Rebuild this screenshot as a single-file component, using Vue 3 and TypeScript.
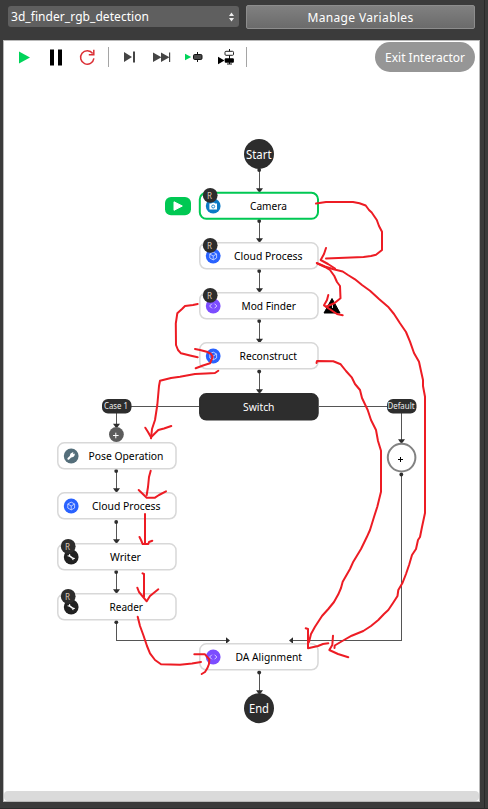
<script setup lang="ts">
type IconKind = 'camera' | 'cube' | 'code' | 'wrench' | 'plug'

interface FlowNode {
  label: string
  x: number
  y: number
  textX: number
  textW: number
  icon?: IconKind
  repeat?: boolean
  kind?: 'active' | 'dark'
}

const nodes: FlowNode[] = [
  { label: 'Camera', x: 199, y: 192, textX: 250, textW: 37, icon: 'camera', repeat: true, kind: 'active' },
  { label: 'Cloud Process', x: 199, y: 242, textX: 234, textW: 68.5, icon: 'cube', repeat: true },
  { label: 'Mod Finder', x: 199, y: 292, textX: 241.5, textW: 54.5, icon: 'code', repeat: true },
  { label: 'Reconstruct', x: 199, y: 342, textX: 239.5, textW: 57.5, icon: 'cube' },
  { label: 'Switch', x: 199, y: 393, textX: 243, textW: 31.5, kind: 'dark' },
  { label: 'Pose Operation', x: 57, y: 442, textX: 88.5, textW: 75, icon: 'wrench' },
  { label: 'Cloud Process', x: 57, y: 492, textX: 92, textW: 68.5, icon: 'cube' },
  { label: 'Writer', x: 57, y: 543, textX: 110, textW: 31, icon: 'plug', repeat: true },
  { label: 'Reader', x: 57, y: 593, textX: 109.5, textW: 33.5, icon: 'plug', repeat: true },
  { label: 'DA Alignment', x: 199, y: 643, textX: 235.5, textW: 66.5, icon: 'code' },
]

const iconColors: Record<IconKind, string> = {
  camera: '#0b7ac5',
  cube: '#2962ff',
  code: '#7c4dff',
  wrench: '#546e7a',
  plug: '#212121',
}

interface Link { x: number; from: number; to: number }

const links: Link[] = [
  { x: 259.5, from: 170, to: 191.5 },
  { x: 259.5, from: 221, to: 241.5 },
  { x: 259.5, from: 271, to: 291.5 },
  { x: 259.5, from: 321, to: 342 },
  { x: 259.5, from: 371.5, to: 392.5 },
  { x: 116.5, from: 413, to: 427 },
  { x: 116.5, from: 471, to: 491.5 },
  { x: 116.5, from: 522, to: 542.5 },
  { x: 116.5, from: 572, to: 592.5 },
  { x: 401.5, from: 413, to: 442.5 },
  { x: 259.5, from: 672.5, to: 693.5 },
]

const strokes: string[] = [
  '316,203.5 326,202 353,202 359.5,203.3 365.7,205.5 369,210 371.7,212.5 376.8,220 379,226 382,231.7 382,250 376,254.7 371,256 363.5,257 326,258.5',
  '326,248 324,254 320.7,260 328,264 335,268.5',
  '316.8,263 325,266.5 333.5,269.3 342.7,271.5 348,275 355,279.3 362,285 370,290.7 379,299 388,306.7 394,314 400,323.3 406,332 410,341.7 414,353 419,361.7 421,371 423,380 423,386 425,396.7 425,513 422,527 420,537 418,540 416,549 412,555 409.3,564.3 406,574 402.3,583.3 398.3,590 397.5,596 393,603 388.3,610 384,614 378.3,620 371,626 363.3,631 351.7,635.7 344,640 334.7,645.5 334.5,648',
  '333,635.7 332.3,645 329.3,650 338,654 348.3,657.3',
  '317,263.3 325,267 330,270 334.3,276 337,282 340,286 340.5,298.3 334.3,303.3 326,306.7',
  '328.3,295 327,300 324,305.3 331,310 337,314 342.7,315.3',
  '316.5,363 317,361 333.3,361.3 340.7,364.3 346,371 351.7,377.3 355,384 360,390 362,398 367.7,410 371,420 376,430 378,441 381,450.7 381,491.7 377.3,506.7 374,517 370,530 366.7,537.3 361,549 353.3,561.7 350,569 342.7,581.7 341,588 338.3,594.3 334,602 328.3,609 322,616 315,626.7 311,634 309,642',
  '305.7,628.3 308,629 308,648.3 318,646 323,644 328.3,643.3',
  '197.7,304 193,305 185,306 182,309 177.3,313.3 175.8,323.3 176,345 178,350 181,353.3 190,355.5 197.7,357.3',
  '195,349 200,350 206.7,351.7 211,354 212.7,356.7 210,363.3 203,365.5 195.7,368.3',
  '218.3,370.7 215,373 206,373.5 195,374 180,376.7 171,378 160,380.7 159,386 157.3,405 155,420 152,429 151,438.3',
  '145.3,427.7 148,432 151,437.3 158.3,430 164,428.5 171.3,426',
  '150.7,470.7 149,477 148,487 146.7,495',
  '138.7,490 146.7,497.7 155,497.7 159,495 166,491.3',
  '145,514 145,543',
  '139.5,537 141,540 142.7,544 148.3,544 149,542 152.3,540.7',
  '142.5,573.3 144,574 144,596.7',
  '137.3,587.7 139,592 146.7,601.3 150,596 158.3,589.3',
  '137.7,616.7 140,626 143.3,635 147,646 150,653.3 155,660 161,664.3 180,664.7 192,663.5 201,662',
  '194.3,654.3 205,654.3 209.3,659.3 209,664 207.3,668.3 205,672 201.7,674',
]
</script>

<template>
  <div class="window">
    <main class="content">
      <header class="header">
        <div class="select">
          <span class="select-text">3d_finder_rgb_detection</span>
          <svg class="spin" width="5" height="10" viewBox="0 0 5 10">
            <path d="M0 4L2.5 0.5L5 4ZM0 6L2.5 9.5L5 6Z" fill="#eee" />
          </svg>
        </div>
        <button class="manage"><span class="manage-text">Manage Variables</span></button>
      </header>

      <section class="panel">
        <div class="toolbar">
          <svg class="tool" viewBox="0 0 32 24"><path d="M11 6.5L22 12.5L11 18.5Z" fill="#00d45a" /></svg>
          <svg class="tool" viewBox="0 0 32 24"><path d="M10 4.5h4v16h-4zM18 4.5h4v16h-4z" fill="#000" /></svg>
          <svg class="tool" viewBox="0 0 32 24">
            <path d="M20.7 8.5A6.7 6.7 0 1 0 21.9 13.4" fill="none" stroke="#db2f35" stroke-width="1.5" />
            <path d="M21.8 4.8V9.7H16.8" fill="none" stroke="#db2f35" stroke-width="1.5" />
          </svg>
          <span class="sep"></span>
          <svg class="tool" viewBox="0 0 32 24"><path d="M10 7L18 12L10 17ZM19 6.5h2v11h-2z" fill="#454545" /></svg>
          <svg class="tool" viewBox="0 0 32 24"><path d="M7 7.5L15 12V7.5L23 12V7.5h1.2v9.5H23V12.5L15 17V12.5L7 17Z" fill="#454545" /></svg>
          <svg class="tool" viewBox="0 0 32 24">
            <path d="M7 8.7L13.2 12L7 15.3Z" fill="#00d45a" />
            <path d="M19.5 7v10" stroke="#111" stroke-width="1" />
            <rect x="15.5" y="9.5" width="8.5" height="5" rx="1.2" fill="#4a4a4a" stroke="#111" />
          </svg>
          <svg class="tool" viewBox="0 0 32 24">
            <path d="M8 11.8L14.5 15.5L8 19.2Z" fill="#000" />
            <path d="M19.5 4v15" stroke="#111" />
            <rect x="15" y="6.3" width="8.5" height="4" rx="1" fill="#fff" stroke="#222" />
            <rect x="14.7" y="13.2" width="9.2" height="4.5" rx="1" fill="#000" />
            <path d="M17 19h5" stroke="#111" />
          </svg>
          <span class="sep"></span>
          <button class="exit"><span class="exit-text">Exit Interactor</span></button>
        </div>

        <svg class="canvas" width="475" height="716" viewBox="4 75 475 716">
          <g stroke="#555" stroke-width="1" fill="none" shape-rendering="crispEdges">
            <path v-for="(l, i) in links" :key="i" :d="`M${l.x} ${l.from}V${l.to}`" />
            <path d="M131 406.5H199M319 406.5H387" />
            <path d="M116.5 622V640.5H228M401.5 474V640.5H291" />
          </g>
          <g fill="#2d2d2d">
            <template v-for="(l, i) in links" :key="i">
              <path :d="`M${l.x - 3.5} ${l.to - 3.2}H${l.x + 3.5}L${l.x + 1} ${l.to + 0.2}H${l.x - 1}Z`" />
              <circle v-if="l.from !== 413" :cx="l.x - 0.3" :cy="l.from" r="1.9" />
            </template>
            <circle cx="116.3" cy="622.2" r="1.9" />
            <circle cx="401.3" cy="474.5" r="1.9" />
            <path d="M226 637.3L230 640.5L226 643.7ZM293 637.3L289 640.5L293 643.7Z" />
            <circle cx="259" cy="154" r="15" />
            <circle cx="259" cy="708.2" r="15" />
            <rect x="102" y="399" width="29.5" height="14.5" rx="6" />
            <rect x="387" y="399" width="29.5" height="14.5" rx="6" />
          </g>

          <g class="terminal">
            <text x="246" y="159" textLength="25.5" lengthAdjust="spacingAndGlyphs">Start</text>
            <text x="249" y="713" textLength="20" lengthAdjust="spacingAndGlyphs">End</text>
          </g>
          <g class="tiny">
            <text x="104" y="409" textLength="24" lengthAdjust="spacingAndGlyphs">Case 1</text>
            <text x="387.5" y="409" textLength="27" lengthAdjust="spacingAndGlyphs">Default</text>
          </g>

          <circle cx="116.4" cy="434.5" r="7.4" fill="#5c5c5c" />
          <path d="M113 435.5H118.6M115.8 432.7V438.3" stroke="#fff" stroke-width="1" />
          <circle cx="401.6" cy="457.6" r="13.8" fill="#fff" stroke="#828282" stroke-width="2" />
          <path d="M398 459.5H403M400.5 457V462" stroke="#000" stroke-width="1" />

          <rect x="165" y="197" width="26" height="18.3" rx="6" fill="#00c853" />
          <path d="M174 201.8L182.3 206L174 210.3Z" fill="#fff" stroke="#fff" stroke-linejoin="round" />

          <g v-for="(n, i) in nodes" :key="i">
            <rect
              :x="n.x + 0.8" :y="n.y + 0.8" width="118.2" height="26" rx="6.5"
              :class="['node', n.kind]"
            />
            <g v-if="n.icon" :transform="`translate(${n.x + 14.2} ${n.y + 14})`">
              <circle r="7.4" :fill="iconColors[n.icon]" />
              <g v-if="n.icon === 'camera'">
                <path d="M-3.8 -2.4H-1.8L-1.2 -3.3H1.2L1.8 -2.4H3.8V3.4H-3.8Z" fill="#fff" />
                <circle cy="0.5" r="1.5" fill="#fff" stroke="#0b7ac5" stroke-width="0.9" />
              </g>
              <path
                v-else-if="n.icon === 'cube'" d="M0 -3.9L3.4 -2V2L0 3.9L-3.4 2V-2ZM-3.4 -2L0 0L3.4 -2M0 0V3.9"
                fill="none" stroke="#c9d6ff" stroke-width="0.9"
              />
              <path
                v-else-if="n.icon === 'code'" d="M-1.3 -2.3L-3.6 0L-1.3 2.3M1.3 -2.3L3.6 0L1.3 2.3"
                fill="none" stroke="#ddd0ff" stroke-width="1"
              />
              <g v-else-if="n.icon === 'wrench'">
                <path d="M-2.8 2.8L0.8 -0.8" stroke="#fff" stroke-width="2" stroke-linecap="round" />
                <path d="M-1.4 -0.6L-0.6 -2.6L1.6 -3.7L2.4 -3.2L1.6 -1.8L3.4 -2.4L3.6 -1L2.4 0.8L0.4 1.4Z" fill="#fff" />
              </g>
              <g v-else stroke="#fff" fill="none">
                <path d="M-1.6 -1.2L1.6 1.4" stroke-width="1.5" />
                <path d="M-3.6 -1.2L-1.8 -0.9L-1.5 -2.9M3.6 1.5L1.9 1.2L1.6 3.2" stroke-width="1.1" />
              </g>
            </g>
            <g v-if="n.repeat">
              <circle :cx="n.x + 11.2" :cy="n.y + 3.3" r="7.4" fill="#2d2d2d" />
              <text class="repeat" :x="n.x + 10.5" :y="n.y + 6.6" text-anchor="middle">R</text>
            </g>
            <text
              :class="['label', { light: n.kind === 'dark' }]" :x="n.textX" :y="n.y + 18"
              :textLength="n.textW" lengthAdjust="spacingAndGlyphs"
            >{{ n.label }}</text>
          </g>

          <path d="M332 298.5L340 313H324Z" fill="#000" stroke="#000" stroke-linejoin="round" />
          <path d="M332.5 304V308M332.5 310V311.5" stroke="#ddd" stroke-width="1" />

          <g class="markup">
            <polyline v-for="(s, i) in strokes" :key="i" :points="s" />
          </g>
        </svg>

        <div class="scrollbar"></div>
      </section>
    </main>
    <aside class="gutter"></aside>
  </div>
</template>

<style>
body {
  margin: 0;
  background: #3b3b3b;
}
</style>

<style scoped>
.window {
  box-sizing: border-box;
  display: flex;
  width: 488px;
  height: 809px;
  overflow: hidden;
  background: #3b3b3b;
  border-bottom: 1px solid #2b2b2b;
  font-family: "Noto Sans", "Open Sans", sans-serif;
}
.content {
  box-sizing: border-box;
  width: 484px;
  padding-left: 3px;
}
.gutter {
  box-sizing: border-box;
  width: 4px;
  border-left: 1px solid #292929;
}
.header {
  box-sizing: border-box;
  display: flex;
  align-items: flex-start;
  gap: 7px;
  height: 40px;
  padding: 5px 0 0 5px;
}
.select {
  box-sizing: border-box;
  display: flex;
  align-items: center;
  justify-content: space-between;
  width: 231px;
  height: 21px;
  margin-top: 1px;
  padding: 0 5px 0 3px;
  border-radius: 3px;
  background: #5f5f5f;
  color: #fff;
}
.select-text,
.manage-text,
.exit-text {
  font-size: 12px;
  line-height: 20px;
  white-space: nowrap;
}
.select-text {
  letter-spacing: 0.06px;
}
.manage-text {
  position: relative;
  top: 1px;
  letter-spacing: 0.35px;
}
.exit-text {
  position: relative;
  top: 1px;
}
.manage {
  box-sizing: border-box;
  width: 229px;
  height: 24px;
  padding: 0;
  border: 1px solid #8d8d8d;
  border-radius: 2px;
  background: linear-gradient(#808080, #6b6b6b);
  color: #fff;
  font-family: inherit;
}
.panel {
  box-sizing: border-box;
  display: flex;
  flex-direction: column;
  width: 477px;
  height: 762px;
  border: 1px solid #b9b9b9;
  background: #fff;
}
.toolbar {
  box-sizing: border-box;
  display: flex;
  align-items: center;
  height: 34px;
  padding: 0 4px;
}
.tool {
  width: 32px;
  height: 24px;
  margin-top: -2px;
}
.sep {
  width: 10px;
  height: 20px;
  margin-top: -2px;
  background: linear-gradient(#a5a5a5, #a5a5a5) 4px 0 / 1px 20px no-repeat;
}
.exit {
  width: 100px;
  height: 30px;
  margin: -2px 0 0 auto;
  padding: 0;
  border: 0;
  border-radius: 15px;
  background: #969696;
  color: #fff;
  font-family: inherit;
}
.canvas {
  display: block;
}
.scrollbar {
  height: 10px;
  border-radius: 4px;
  background: #dadada;
}
.node {
  fill: #fff;
  stroke: #d8d8d8;
  stroke-width: 1.5;
}
.node.active {
  stroke: #00c853;
  stroke-width: 2;
}
.node.dark {
  fill: #2d2d2d;
  stroke: #2d2d2d;
}
.label {
  font-size: 11px;
  fill: #000;
}
.light {
  fill: #fff;
}
.terminal {
  font-size: 12px;
  fill: #fff;
}
.tiny {
  font-size: 8px;
  fill: #eee;
}
.repeat {
  font-size: 8px;
  fill: #ddc9b8;
}
.markup {
  fill: none;
  stroke: #ed1c24;
  stroke-width: 2;
  stroke-linejoin: round;
  stroke-linecap: round;
}
</style>
